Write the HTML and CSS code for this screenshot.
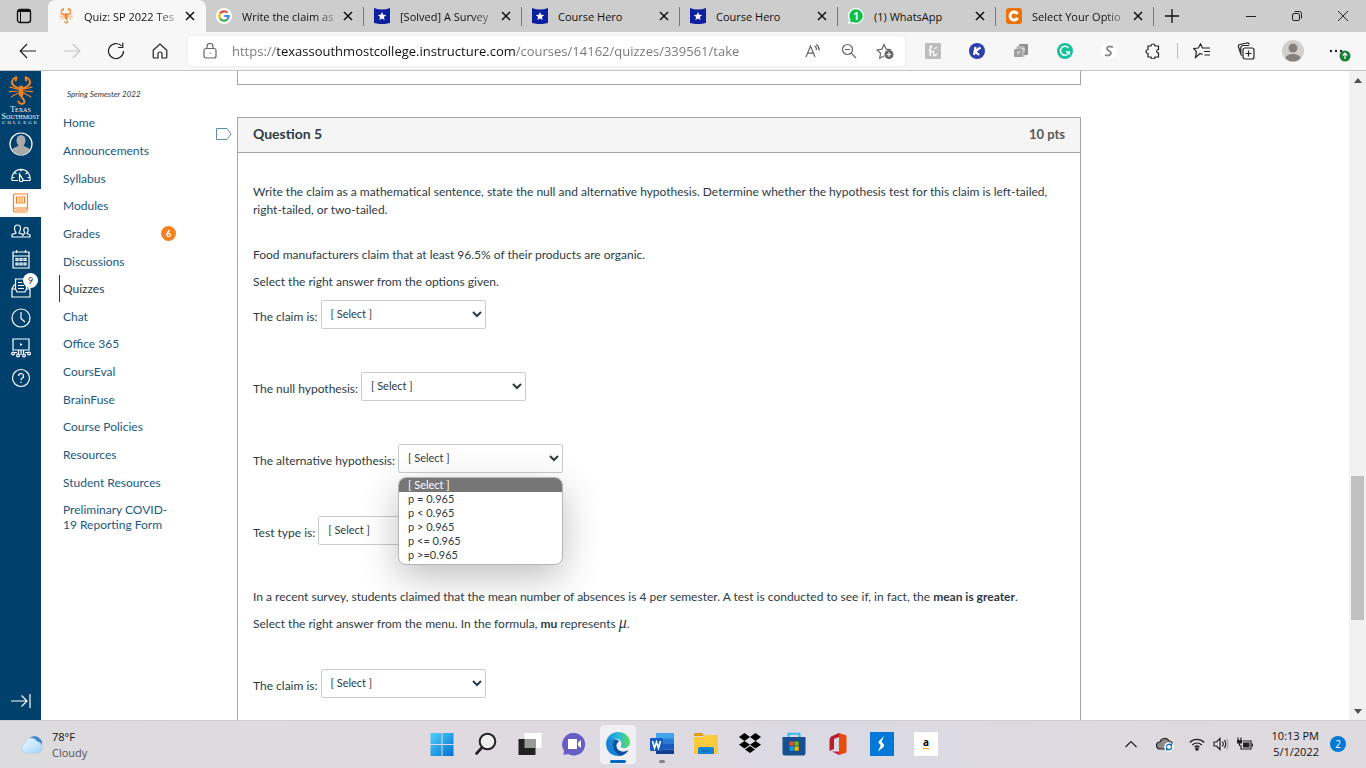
FILE: index.html
```
<!DOCTYPE html>
<html lang="en">
<head>
  <meta charset="UTF-8" />
  <meta name="viewport" content="width=device-width, initial-scale=1" />
  <title>Quiz: SP 2022 Test</title>
  <link rel="stylesheet" href="styles.css">
</head>
<body>

  <!-- tab strip -->
  <div class="tabstrip">
    <button class="tab-actions" aria-label="Tab actions">
      <svg width="16" height="16" viewBox="0 0 16 16"><rect x="1.5" y="1.5" width="13" height="13" rx="2.5" fill="none" stroke="#111" stroke-width="1.4"/><path d="M1.5 4h13V3a2 2 0 0 0-2-1.500h-9a2 2 0 0 0-2 1.500z" fill="#111"/><path d="M4.500 4v10" stroke="#111"/></svg>
    </button>
    <div class="tabs">
      <div class="tab active">
        <svg class="favicon" viewBox="0 0 40 46"><use href="#scorpion"/></svg>
        <span class="tab-title fade">Quiz: SP 2022 Tes</span>
        <button class="tab-close" aria-label="Close tab"><svg width="10" height="10" viewBox="0 0 10 10"><path d="M1 1l8 8M9 1l-8 8"/></svg></button>
      </div>
      <div class="tab">
        <svg class="favicon" viewBox="0 0 16 16"><circle cx="8" cy="8" r="8" fill="#fff"/><path d="M11.300 4.600A4.700 4.700 0 0 0 4 5.500" stroke="#ea4335" stroke-width="2.200" fill="none"/><path d="M4 5.500a4.700 4.700 0 0 0 0 5" stroke="#fbbc05" stroke-width="2.200" fill="none"/><path d="M4 10.500a4.700 4.700 0 0 0 7.200 1" stroke="#34a853" stroke-width="2.200" fill="none"/><path d="M11.200 11.500A4.700 4.700 0 0 0 12.700 8H8.200" stroke="#4285f4" stroke-width="2.200" fill="none"/></svg>
        <span class="tab-title fade">Write the claim as</span>
        <button class="tab-close" aria-label="Close tab"><svg width="10" height="10" viewBox="0 0 10 10"><path d="M1 1l8 8M9 1l-8 8"/></svg></button>
      </div>
      <div class="tab">
        <svg class="favicon" viewBox="0 0 16 16"><use href="#hero"/></svg>
        <span class="tab-title fade">[Solved] A Survey</span>
        <button class="tab-close" aria-label="Close tab"><svg width="10" height="10" viewBox="0 0 10 10"><path d="M1 1l8 8M9 1l-8 8"/></svg></button>
      </div>
      <div class="tab">
        <svg class="favicon" viewBox="0 0 16 16"><use href="#hero"/></svg>
        <span class="tab-title">Course Hero</span>
        <button class="tab-close" aria-label="Close tab"><svg width="10" height="10" viewBox="0 0 10 10"><path d="M1 1l8 8M9 1l-8 8"/></svg></button>
      </div>
      <div class="tab">
        <svg class="favicon" viewBox="0 0 16 16"><use href="#hero"/></svg>
        <span class="tab-title">Course Hero</span>
        <button class="tab-close" aria-label="Close tab"><svg width="10" height="10" viewBox="0 0 10 10"><path d="M1 1l8 8M9 1l-8 8"/></svg></button>
      </div>
      <div class="tab">
        <svg class="favicon" viewBox="0 0 16 16"><path d="M8 0a8 8 0 1 1-4 15L0 16l1-4A8 8 0 0 1 8 0z" fill="#fff"/><path d="M8 1.300a6.700 6.700 0 1 1-3.500 12.400L2 14.200l.600-2.400A6.700 6.700 0 0 1 8 1.300z" fill="#0cc143"/><text x="8" y="11.500" font-size="10" font-weight="700" fill="#fff" text-anchor="middle">1</text></svg>
        <span class="tab-title">(1) WhatsApp</span>
        <button class="tab-close" aria-label="Close tab"><svg width="10" height="10" viewBox="0 0 10 10"><path d="M1 1l8 8M9 1l-8 8"/></svg></button>
      </div>
      <div class="tab">
        <svg class="favicon" viewBox="0 0 16 16"><rect width="16" height="16" rx="3" fill="#eb7100"/><path d="M11.500 6A4 4 0 1 0 11.500 10" stroke="#fff" stroke-width="3" fill="none"/></svg>
        <span class="tab-title fade">Select Your Optio</span>
        <button class="tab-close" aria-label="Close tab"><svg width="10" height="10" viewBox="0 0 10 10"><path d="M1 1l8 8M9 1l-8 8"/></svg></button>
      </div>
      <button class="new-tab" aria-label="New tab"><svg width="14" height="14" viewBox="0 0 14 14"><path d="M7 0v14M0 7h14" stroke="#111" stroke-width="1.300"/></svg></button>
    </div>
    <div class="window-buttons">
      <button aria-label="Minimize"><svg width="10" height="10" viewBox="0 0 10 10"><path d="M0 5.500h10"/></svg></button>
      <button aria-label="Restore"><svg width="10" height="10" viewBox="0 0 10 10"><rect x=".5" y="2.500" width="7" height="7" rx="1.500"/><path d="M2.500.500h5a2 2 0 0 1 2 2v5"/></svg></button>
      <button aria-label="Close"><svg width="10" height="10" viewBox="0 0 10 10"><path d="M0 0l10 10M10 0L0 10"/></svg></button>
    </div>
  </div>

  <!-- toolbar -->
  <div class="toolbar">
    <button aria-label="Back"><svg width="18" height="16" viewBox="0 0 18 16"><path d="M17 8H1.500M8 1L1.200 8 8 15"/></svg></button>
    <button class="disabled" aria-label="Forward" disabled><svg width="18" height="16" viewBox="0 0 18 16"><path d="M1 8h15.500M10 1l6.800 7-6.800 7"/></svg></button>
    <button aria-label="Refresh"><svg width="18" height="18" viewBox="0 0 18 18"><path d="M16.500 9A7.500 7.500 0 1 1 14.500 3.900M15.800.800v4.700h-4.700"/></svg></button>
    <button aria-label="Home"><svg width="16" height="16" viewBox="0 0 16 16"><path d="M1.200 7.200L8 1l6.800 6.200V14a1 1 0 0 1-1 1H10v-4a2 2 0 0 0-4 0v4H2.200a1 1 0 0 1-1-1z"/></svg></button>
    <div class="address">
      <svg width="14" height="16" viewBox="0 0 14 16"><rect x="1" y="5.500" width="12" height="9.500" rx="2"/><path d="M4 5.500V3.500a3 3 0 0 1 6 0v2M6.500 10.200h1"/></svg>
      <input class="url" type="text" aria-label="Address" value="https://texassouthmostcollege.instructure.com/courses/14162/quizzes/339561/take">
      <button aria-label="Read aloud"><svg width="16" height="16" viewBox="0 0 16 16"><path d="M1 14L5.500 3 10 14M2.600 10.200h5.800M9.500 3a4 4 0 0 1 2 4M11.200 1.500a7 7 0 0 1 3 6"/></svg></button>
      <button aria-label="Zoom out"><svg width="16" height="16" viewBox="0 0 16 16"><circle cx="6.500" cy="6.500" r="5"/><path d="M4 6.500h5M10.200 10.200L15 15"/></svg></button>
      <button aria-label="Add to favorites"><svg width="18" height="18" viewBox="0 0 18 18"><path d="M8 14l-4.300 2.200.900-4.900L1 7.900l5-.700L8 2.500l2.200 4.700 5 .700"/><circle cx="13" cy="12.500" r="4.500" fill="#666" stroke="none"/><path d="M13 10.200v4.600M10.700 12.500h4.600" stroke="#fff"/></svg></button>
    </div>
    <button aria-label="Honey"><svg width="16" height="16" viewBox="0 0 16 16"><rect width="16" height="16" rx="1" fill="#bdbdbd" stroke="none"/><path d="M3.500 7.500C6 6.500 7.500 3 6.200 2.800S5 8 5 13c.600-3 1.800-5 3-4.800S7.800 13 9.500 12.800L12 11M9 5.500l3-1" stroke="#fff" stroke-width="1.200"/></svg></button>
    <button aria-label="Keeper"><svg width="16" height="16" viewBox="0 0 16 16"><circle cx="8" cy="8" r="8" fill="#2f3fb0" stroke="none"/><path d="M6.500 4l-1.500 8M11.500 4.500L6 8.300l4 3.700" stroke="#fff" stroke-width="2.200"/></svg></button>
    <button aria-label="Files"><svg width="16" height="16" viewBox="0 0 16 16"><rect x="6" y="1" width="9" height="11" rx="1" fill="#8f8f8f" stroke="none"/><rect x="3.500" y="3" width="8" height="11" rx="1" fill="#b8b8b8" stroke="none"/><rect x="1" y="6" width="8" height="8" rx="1" fill="#a0a0a0" stroke="none"/><path d="M5 11.500V9h2.500M9 5.500h2v3" stroke="#e4e4e4"/></svg></button>
    <button aria-label="Grammarly"><svg width="16" height="16" viewBox="0 0 16 16"><circle cx="8" cy="8" r="8" fill="#15c39a" stroke="none"/><path d="M11.500 5A4.500 4.500 0 1 0 12.300 9H9M12.300 9v2.500" stroke="#fff" stroke-width="1.500"/></svg></button>
    <button aria-label="Scribe"><svg width="16" height="16" viewBox="0 0 16 16"><circle cx="8" cy="8" r="8" fill="#fff" stroke="none"/><path d="M12 4C9 3 6 3.200 6 5.500S10.500 8 10 10.300 6.500 13 4 11.800" stroke="#8c8c8c" stroke-width="2"/></svg></button>
    <button aria-label="Extensions"><svg width="16" height="16" viewBox="0 0 16 16"><path d="M3 3h3a2 2 0 0 1 4 0h3.500v3.500a1.800 1.800 0 0 0 0 3.600V14H10a2 2 0 0 1-4 0H3v-3.500a2 2 0 0 1 0-4z"/></svg></button>
    <span class="divider"></span>
    <button aria-label="Favorites"><svg width="18" height="16" viewBox="0 0 18 16"><path d="M9.500 11.500L7 10.500l-4.500 4 .900-5.800L.800 5.500l4.500-.500L7.500 1l2 4h7.500M11 8.500h6M11.500 12h5.500"/></svg></button>
    <button aria-label="Collections"><svg width="18" height="18" viewBox="0 0 18 18"><rect x="6" y="6" width="11" height="11" rx="2"/><path d="M11.500 8.500v6M8.500 11.500h6M4 12.500L1.500 5a2 2 0 0 1 1.300-2.500L10 1a2 2 0 0 1 2.300 1.500M5 13.500A2 2 0 0 1 3.800 12V6a2.500 2.500 0 0 1 2.500-2.500H12"/></svg></button>
    <button class="wide" aria-label="Profile"><svg width="22" height="22" viewBox="0 0 22 22"><circle cx="11" cy="11" r="11" fill="#d2d0ce" stroke="none"/><circle cx="11" cy="8" r="4.500" fill="#84807d" stroke="none"/><path d="M3.500 18.500c0-6 15-6 15 0A11 11 0 0 1 3.500 18.500z" fill="#84807d" stroke="none"/></svg></button>
    <button aria-label="Settings and more"><svg width="22" height="22" viewBox="0 0 22 22"><g fill="#222" stroke="none"><circle cx="2" cy="11" r="1.200"/><circle cx="7" cy="11" r="1.200"/><circle cx="12" cy="11" r="1.200"/></g><circle cx="16" cy="16" r="5.500" fill="#1a7f37" stroke="none"/><path d="M16 19v-5.500M13.800 15.500L16 13.200l2.200 2.300" stroke="#fff"/></svg></button>
  </div>

  <!-- page -->
  <div class="page">
    <div class="global-nav">
      <a class="logo" href="#">
        <svg width="26" height="30" viewBox="0 0 40 46">
          <g id="scorpion" fill="none" stroke="#f58220" stroke-linecap="round">
            <path d="M12 2C6 4 4 11 9 15l7 4M13 2l-1 5M28 2c6 2 8 9 3 13l-7 4M27 2l1 5" stroke-width="3"/>
            <path d="M15 20L3 17M15 23L2 24M16 26L5 32M25 20l12-3M25 23l13 1M24 26l11 6" stroke-width="1.800"/>
            <path d="M20 18v10" stroke-width="7"/>
            <path d="M20 30c1 4 7 7 5 11-2 3-8 2-9-2" stroke-width="3"/>
          </g>
        </svg>
        <span class="logo-top">Texas</span>
        <span class="logo-mid">Southmost</span>
        <span class="logo-low">COLLEGE</span>
      </a>
      <a class="account" href="#" aria-label="Account"><svg width="24" height="24" viewBox="0 0 24 24"><circle cx="12" cy="12" r="11" fill="#00406d" stroke="#fff" stroke-width="1.200"/><ellipse cx="12" cy="8.500" rx="4.500" ry="5.500" fill="#aaa" stroke="none"/><path d="M3 18c1-3 6-3 6.500-5h5c.500 2 5.500 2 6.500 5a10.500 10.500 0 0 1-18 0z" fill="#aaa" stroke="none"/></svg></a>
      <a href="#" aria-label="Dashboard"><svg width="20" height="14" viewBox="0 0 20 14"><path d="M1 12.500A9.200 9.200 0 1 1 19 12.500H12.500M1 12.500h6M10 1v2.500M3.500 4.500L5.500 6M16.500 4.500l-2 1.500M1.500 9.500h2M18.500 9.500h-2M8.500 6l2.800 4.500a1.800 1.800 0 1 1-2.800 1z"/></svg></a>
      <a class="current" href="#" aria-label="Courses"><svg width="18" height="20" viewBox="0 0 18 20"><path d="M3 1h12.500v14H3.500a2 2 0 0 0 0 4h12M3 1a1.500 1.500 0 0 0-1.500 2v14M3.500 17h12M4.500 4h8v6h-8zM6 6h5M6 8h5M15.500 15v2"/></svg></a>
      <a href="#" aria-label="Groups"><svg width="20" height="14" viewBox="0 0 20 14"><path d="M1 13v-2.500L5 9c0-1-1.500-2-1.500-4.500C3.500 2 4.500 1 6.500 1s3 1 3 3.500C9.500 7 8 8 8 9l4 1.500V13zM13 13h6v-2l-3-1.500c0-1 1.200-1.500 1.200-3.500S16.500 3.500 15 3.500 12.800 4.500 12.800 6s1 2.500 1 3.500l-1.500.500"/></svg></a>
      <a href="#" aria-label="Calendar"><svg width="18" height="20" viewBox="0 0 18 20"><path d="M1 3h16v16H1zM1 7h16M4.500 1v3M13.500 1v3M4 9.500h2v2H4zM8 9.500h2v2H8zM12 9.500h2v2h-2zM4 14h2v2H4zM8 14h2v2H8zM12 14h2v2h-2z"/></svg></a>
      <a class="tall inbox" href="#" aria-label="Inbox"><svg width="20" height="20" viewBox="0 0 20 20"><path d="M4.500 11V1h11v10M1 11h3.500l1.500 3h8l1.500-3H19v8H1zM1 11l2-4h1.500M19 11l-2-4h-1.500M7 4.500h4M7 7.500h6M7 10.500h6"/></svg><span class="inbox-count">9</span></a>
      <a class="tall" href="#" aria-label="History"><svg width="20" height="20" viewBox="0 0 20 20"><circle cx="10" cy="10" r="9"/><path d="M10 4v6.500l4 3.500"/></svg></a>
      <a class="tall" href="#" aria-label="Studio"><svg width="20" height="20" viewBox="0 0 20 20"><path d="M2 1h16v11H2zM7.500 12v4M12.500 12v4M10 12v5M3 14.500h3M14 14.500h3"/><path d="M9 5l2.500 1.500L9 8z" fill="#fff" stroke="none"/><circle cx="2" cy="15.500" r="1.400"/><circle cx="18" cy="15.500" r="1.400"/><circle cx="7" cy="17.500" r="1.400"/><circle cx="13" cy="17.500" r="1.400"/></svg></a>
      <a class="tall" href="#" aria-label="Help"><svg width="20" height="20" viewBox="0 0 20 20"><circle cx="10" cy="10" r="8.500"/><path d="M7.500 8a2.500 2.500 0 1 1 3.500 2.300c-.800.400-1 .800-1 2M10 13.700v1.300"/></svg></a>
      <button class="expand" aria-label="Expand navigation"><svg width="20" height="16" viewBox="0 0 20 16"><path d="M0 8h16M10.500 2.500L16 8l-5.500 5.500M19 1v14"/></svg></button>
    </div>

    <div class="course-nav">
      <div class="term">Spring Semester 2022</div>
      <div class="menu">
        <a href="#">Home</a>
        <a href="#">Announcements</a>
        <a href="#">Syllabus</a>
        <a href="#">Modules</a>
        <a href="#">Grades <span class="badge">6</span></a>
        <a href="#">Discussions</a>
        <a class="selected" href="#">Quizzes</a>
        <a href="#">Chat</a>
        <a href="#">Office 365</a>
        <a href="#">CoursEval</a>
        <a href="#">BrainFuse</a>
        <a href="#">Course Policies</a>
        <a href="#">Resources</a>
        <a href="#">Student Resources</a>
      </div>
      <a class="long" href="#">Preliminary COVID-19 Reporting Form</a>
    </div>

    <div class="content">
      <div class="previous"></div>
      <button class="flag" aria-label="Mark question"><svg width="16" height="12" viewBox="0 0 16 12"><path d="M.5.500h10.500l4 5.500-4 5.500H.500z"/></svg></button>
      <div class="question">
        <div class="question-header">
          <span class="question-name">Question 5</span>
          <span class="question-points">10 pts</span>
        </div>
        <div class="question-text">
          <p class="intro">Write the claim as a mathematical sentence, state the null and alternative hypothesis. Determine whether the hypothesis test for this claim is left-tailed, right-tailed, or two-tailed.</p>
          <p>Food manufacturers claim that at least 96.5% of their products are organic.</p>
          <p>Select the right answer from the options given.</p>
          <div class="answer">
            <label for="claim1">The claim is:</label>
            <select id="claim1"><option>[ Select ]</option></select>
          </div>
          <div class="answer">
            <label for="null1">The null hypothesis:</label>
            <select id="null1"><option>[ Select ]</option></select>
          </div>
          <div class="answer">
            <label for="alt1">The alternative hypothesis:</label>
            <div class="open-select">
              <select id="alt1"><option>[ Select ]</option></select>
              <ul class="options">
                <li class="highlight">[ Select ]</li>
                <li>p = 0.965</li>
                <li>p &lt; 0.965</li>
                <li>p &gt; 0.965</li>
                <li>p &lt;= 0.965</li>
                <li>p &gt;=0.965</li>
              </ul>
            </div>
          </div>
          <div class="answer">
            <label for="type1">Test type is:</label>
            <select id="type1"><option>[ Select ]</option></select>
          </div>
          <p>In a recent survey, students claimed that the mean number of absences is 4 per semester. A test is conducted to see if, in fact, the <strong>mean is greater</strong>.</p>
          <p class="formula">Select the right answer from the menu. In the formula, <strong>mu</strong> represents <i class="mu">μ</i>.</p>
          <div class="answer">
            <label for="claim2">The claim is:</label>
            <select id="claim2"><option>[ Select ]</option></select>
          </div>
        </div>
      </div>
    </div>

    <div class="scrollbar">
      <svg width="16" height="18" viewBox="0 0 16 18"><path d="M4 12l4-5 4 5z"/></svg>
      <div class="track"><div class="thumb"></div></div>
      <svg width="16" height="18" viewBox="0 0 16 18"><path d="M4 7l4 5 4-5z"/></svg>
    </div>
  </div>

  <!-- taskbar -->
  <div class="taskbar">
    <div class="weather">
      <svg width="24" height="20" viewBox="0 0 24 20"><defs><linearGradient id="cloud" x2="1" y2="1"><stop stop-color="#f2fbff"/><stop offset="1" stop-color="#9fd4f5"/></linearGradient></defs><path d="M10 3c3-3 10-2 12 4v7H12z" fill="#3f87cf"/><path d="M5.500 18a5 5 0 0 1-.500-9.500 6.500 6.500 0 0 1 12-2 6 6 0 0 1 1.500 11.500z" fill="url(#cloud)" stroke="#a5cfe8" stroke-width=".6"/></svg>
      <div>
        <div>78°F</div>
        <div class="muted">Cloudy</div>
      </div>
    </div>
    <div class="apps">
      <button aria-label="Start"><svg width="24" height="24" viewBox="0 0 24 24"><defs><linearGradient id="win" x2="1" y2="1"><stop stop-color="#50d0fb"/><stop offset="1" stop-color="#0070d0"/></linearGradient></defs><path d="M.5 1h11v11H.500zM12.500 1h11v11h-11zM.5 13h11v11H.500zM12.500 13h11v11h-11z" fill="url(#win)"/></svg></button>
      <button aria-label="Search"><svg width="24" height="24" viewBox="0 0 24 24"><circle cx="13.500" cy="9.500" r="7.800" fill="#eee" stroke="#222" stroke-width="2"/><path d="M8 15.500L2.500 21.500" stroke="#222" stroke-width="2.600" stroke-linecap="round"/></svg></button>
      <button aria-label="Task view"><svg width="24" height="24" viewBox="0 0 24 24"><rect x="6.500" y="1" width="17" height="15" fill="#fff"/><rect x=".5" y="7" width="17" height="16" fill="#222"/><rect x="6.500" y="7" width="11" height="9" fill="#9b9b9b"/></svg></button>
      <button aria-label="Chat"><svg width="24" height="24" viewBox="0 0 24 24"><path d="M12 1a11.300 11.300 0 1 1-6 21l-4.500 1L2 18.500A11.300 11.300 0 0 1 12 1z" fill="#665dc6"/><path d="M6 7h9v10H6zM16 10.500L19 8v8l-3-2.500z" fill="#fff"/></svg></button>
      <button class="running focused" aria-label="Edge"><svg width="24" height="24" viewBox="0 0 24 24"><defs><linearGradient id="edge1" x2="1" y2="0"><stop stop-color="#168de0"/><stop offset=".5" stop-color="#29b8dc"/><stop offset="1" stop-color="#5bdc55"/></linearGradient></defs><path d="M0 11C1 4 6 0 12 0c7 0 12 5 12 10 0 4-3 6-6 6-2.500 0-4-1-3-2.500C17 9 12 6 8 7 4 7 1 9 0 11z" fill="url(#edge1)"/><path d="M0 11c1-3 4-4.500 8-4 4 0 5 3 5 3-4-1-5 9 4 10 3 0 4-1 5-1.500C20 22 16 24 12 24 5 24 0 19 0 11z" fill="#1683d8"/><path d="M9 8c-4 4-2 13 6 15.700C19 23 21 20.500 22.500 18c-6 4-13 0-12-5 .200-1.500 1-3 2.500-3.500C12 8 10.500 8 9 8z" fill="#0c4f9d"/></svg></button>
      <button class="running" aria-label="Word"><svg width="24" height="24" viewBox="0 0 24 24"><path d="M6 1h18v6H6z" fill="#41a5ee"/><path d="M6 6.500h18V12H6z" fill="#2b7cd3"/><path d="M6 12h18v5.500H6z" fill="#185abd"/><path d="M6 17.500h18V22H6z" fill="#103f91"/><rect y="6" width="13" height="13" rx="1" fill="#185abd"/><path d="M2.500 9l2 7 2-6 2 6 2-7" stroke="#fff" stroke-width="1.600" fill="none"/></svg></button>
      <button aria-label="File Explorer"><svg width="24" height="24" viewBox="0 0 24 24"><path d="M0 2.500A1.500 1.500 0 0 1 1.500 1H8l2 3h-10z" fill="#dd9b0c"/><path d="M0 5h9l2-2h13v19H0z" fill="#fccb3d"/><path d="M4 22v-5a2 2 0 0 1 2-2h12a2 2 0 0 1 2 2v5z" fill="#1783d1"/><path d="M8 19h8" stroke="#0b5da4"/></svg></button>
      <button aria-label="Dropbox"><svg width="24" height="24" viewBox="0 0 24 24"><path d="M6.500 1l5.500 4-5.500 4L1 5zM17.500 1L23 5l-5.500 4L12 5zM6.500 9l5.500 3.700-5.500 3.800L1 12.700zM17.500 9l5.500 3.700-5.500 3.800L12 12.700zM12 14l5 3.500-5 3.500-5-3.500z" fill="#000"/></svg></button>
      <button aria-label="Microsoft Store"><svg width="24" height="24" viewBox="0 0 24 24"><path d="M6.500 7V1.800h11V7" fill="none" stroke="#36b9ef" stroke-width="2"/><path d="M.5 5h23v16a2.500 2.500 0 0 1-2.500 2.500H3A2.500 2.500 0 0 1 .500 21z" fill="#174f8f"/><path fill="#f25022" d="M7.500 9.500h4.200v4.200H7.500z"/><path fill="#7fba00" d="M12.500 9.500h4.200v4.200h-4.200z"/><path fill="#00a4ef" d="M7.500 14.500h4.200v4.200H7.500z"/><path fill="#ffb900" d="M12.500 14.500h4.200v4.200h-4.200z"/></svg></button>
      <button aria-label="Office"><svg width="24" height="24" viewBox="0 0 24 24"><path d="M13 1l7.500 2.500v17L13 23z" fill="#e64a0c"/><path d="M13 1L5 4.500 3.500 7v12L8 17V7l5-2z" fill="#b91f2e"/><path d="M6 19.500h7V23z" fill="#cf1b4c"/></svg></button>
      <button aria-label="Stylus app"><svg width="24" height="24" viewBox="0 0 24 24"><path d="M0 0h24v24H0z" fill="#0078d7"/><path d="M14 4L9 9q-1 1.500 0 2.500l1.800 1.500L8 19.500l5.500-4.500q1.500-1.500 0-3L11.500 10z" fill="#fff"/></svg></button>
      <button aria-label="Amazon"><span class="amazon">a</span></button>
    </div>
    <div class="tray">
      <button aria-label="Show hidden icons"><svg width="14" height="10" viewBox="0 0 14 10"><path d="M1.500 8L7 2.500 12.500 8"/></svg></button>
      <svg width="18" height="16" viewBox="0 0 18 16"><path d="M4 13a3.500 3.500 0 0 1 0-7c1-4 7-5 9-1 3 0 4 3 3 5v3z" fill="#8a8a8a" stroke="#222"/><circle cx="13" cy="11" r="4.800" fill="#fff" stroke="none"/><path d="M10.300 10.500a2.800 2.800 0 0 1 5-1V7.500M15.700 11.500a2.800 2.800 0 0 1-5 1v2" stroke="#0f6cbd" stroke-width="1.500"/></svg>
      <svg class="wifi" width="16" height="14" viewBox="0 0 16 14"><path d="M.8 5.500a10 10 0 0 1 14.400 0M3.200 8a6.800 6.800 0 0 1 9.600 0M5.500 10.200a3.600 3.600 0 0 1 5 0"/><circle cx="8" cy="12" r="1.200" fill="#222"/></svg>
      <svg width="16" height="14" viewBox="0 0 16 14"><path d="M1 5h2.500L7 1.500v11L3.500 9H1zM9.500 4.500q1.500 2.500 0 5M11.500 3q2.500 4 0 8"/><path d="M13.500 1.500q3 5.500 0 11" stroke="#aaa"/></svg>
      <svg width="16" height="14" viewBox="0 0 16 14"><path d="M5.500 4H14v8H4V8M15.500 6.500v3"/><path d="M6 5.500h6.500v5H6zM0 3h5v3.500H0z" fill="#222" stroke="none"/><path d="M1 3V.500M4 3V.500M2.500 6v3"/></svg>
      <div class="clock">
        <div>10:13 PM</div>
        <div>5/1/2022</div>
      </div>
      <span class="notice">2</span>
    </div>
  </div>

  <svg class="defs" width="0" height="0">
    <g id="hero"><path d="M0 0q8 3 16 0v15l-8 1.500L0 15z" fill="#0c1f9e"/><path d="M8 4l1.200 2.700 3 .300-2.300 2 .700 3L8 10.400 5.400 12l.700-3-2.300-2 3-.300z" fill="#fff"/></g>
  </svg>

</body>
</html>
```
FILE: styles.css
```
* {
  box-sizing: border-box;
}
body {
  margin: 0;
  height: 100vh;
  display: flex;
  flex-direction: column;
  overflow: hidden;
  background-color: #fff;
  font-family: "Open Sans", sans-serif;
  font-size: 11px;
  color: #111;
}
button {
  display: flex;
  align-items: center;
  justify-content: center;
  padding: 0;
  border: none;
  background: none;
  font-family: inherit;
}
svg {
  display: block;
  flex: none;
}
a {
  text-decoration: none;
}
.defs {
  position: absolute;
}

/* tab strip */
.tabstrip {
  flex: none;
  display: flex;
  height: 32px;
  background-color: #cdcdcd;
}
.tab-actions {
  width: 48px;
}
.tabs {
  flex: 1;
  display: flex;
  min-width: 0;
}
.tab {
  flex: 0 1 158px;
  min-width: 0;
  display: flex;
  align-items: center;
  padding: 0 11px 0 10px;
  position: relative;
}
.tab:not(.active)::after {
  content: "";
  position: absolute;
  right: 0;
  top: 7px;
  width: 1px;
  height: 19px;
  background-color: #777;
}
.tab.active {
  background-color: #f7f7f7;
  border-radius: 7px 7px 0 0;
}
.favicon {
  width: 16px;
  height: 16px;
  margin-right: 10px;
}
.tab-title {
  flex: 1;
  overflow: hidden;
  white-space: nowrap;
}
.tab-title.fade {
  mask-image: linear-gradient(to right, #000 75%, rgba(0, 0, 0, 0.2));
}
.tab-close {
  width: 10px;
  margin-left: 5px;
}
.tab-close svg {
  stroke: #111;
  stroke-width: 1.5;
}
.new-tab {
  width: 36px;
}
.window-buttons {
  display: flex;
}
.window-buttons button {
  width: 46px;
}
.window-buttons svg {
  fill: none;
  stroke: #222;
}

/* toolbar */
.toolbar {
  flex: none;
  display: flex;
  align-items: center;
  height: 39px;
  padding: 0 4px 0 6px;
  background-color: #f7f7f7;
  border-bottom: 1px solid #c4c4c4;
}
.toolbar > button {
  width: 44px;
}
.toolbar > .wide {
  width: 50px;
}
.toolbar svg {
  fill: none;
  stroke: #222;
  stroke-width: 1.2;
}
.toolbar .disabled svg {
  stroke: #c6c6c6;
}
.address {
  flex: 1;
  display: flex;
  align-items: center;
  height: 30px;
  margin: 0 6px;
  padding: 0 2px 0 15px;
  background-color: #fff;
  border-radius: 4px;
  box-shadow: 0 0 3px #e4e4e4;
}
.address svg {
  stroke: #666;
}
.address button {
  width: 36px;
}
.url {
  flex: 1;
  min-width: 0;
  margin-left: 15px;
  padding: 0;
  border: none;
  font-family: inherit;
  font-size: 13px;
  color: transparent;
  background: linear-gradient(to right, #757575 45px, #111 45px, #111 284px, #757575 284px);
  background-clip: text;
  -webkit-background-clip: text;
}
.divider {
  width: 1px;
  height: 16px;
  margin: 0 2px;
  background-color: #c0c0c0;
}

/* page */
.page {
  flex: 1;
  min-height: 0;
  display: flex;
  overflow: hidden;
  font-family: Lato, sans-serif;
  color: #2d3b45;
}
.global-nav {
  flex: none;
  width: 41px;
  display: flex;
  flex-direction: column;
  background-color: #00406d;
}
.global-nav a,
.expand {
  display: flex;
  align-items: center;
  justify-content: center;
  height: 28px;
}
.global-nav svg {
  fill: none;
  stroke: #fff;
  stroke-width: 1.2;
}
.global-nav .logo {
  flex-direction: column;
  justify-content: flex-start;
  height: 56px;
  padding-top: 5px;
  overflow: hidden;
  font-family: "Liberation Serif", serif;
  font-variant: small-caps;
  color: #fff;
}
.logo-top,
.logo-mid {
  font-size: 8px;
  line-height: 7px;
}
.logo-low {
  font-size: 5px;
  line-height: 5px;
  letter-spacing: 2px;
}
.global-nav .account {
  height: 34px;
}
.global-nav .current {
  background-color: #fff;
}
.global-nav .current svg {
  stroke: #f58220;
}
.global-nav .tall {
  height: 30px;
}
.inbox {
  position: relative;
}
.inbox-count {
  position: absolute;
  top: 0;
  right: 3px;
  width: 15px;
  height: 15px;
  border-radius: 50%;
  background-color: #fff;
  color: #2d3b45;
  font-size: 9px;
  line-height: 15px;
  text-align: center;
}
.expand {
  height: 38px;
  margin-top: auto;
}

.course-nav {
  flex: none;
  width: 175px;
  padding: 16px 40px 0 18px;
  font-size: 12px;
}
.term {
  padding-left: 8px;
  margin-bottom: 7px;
  font-size: 8px;
  font-style: italic;
  line-height: 15px;
  white-space: nowrap;
}
.course-nav a {
  color: #20597f;
}
.menu {
  display: grid;
  grid-auto-rows: 1fr;
  height: 387px;
}
.menu a {
  display: flex;
  align-items: center;
  justify-content: space-between;
  padding-left: 3px;
  border-left: 1px solid transparent;
  white-space: nowrap;
}
.menu .selected {
  border-color: #2d3b45;
  color: #2d3b45;
}
.badge {
  width: 15px;
  height: 15px;
  border-radius: 50%;
  background-color: #f58220;
  color: #fff;
  font-size: 9px;
  font-weight: bold;
  line-height: 15px;
  text-align: center;
}
.long {
  display: block;
  padding: 6px 0 0 4px;
  line-height: 15px;
}

.content {
  flex: 1;
  min-width: 0;
  display: grid;
  grid-template-columns: 21px 1fr;
  grid-template-rows: 14px 1fr;
  row-gap: 32px;
  padding-right: 268px;
}
.previous {
  grid-column: 2;
  border: 1px solid #a5a5a5;
  border-top: none;
}
.flag {
  align-self: start;
  justify-content: flex-start;
  height: 34px;
}
.flag svg {
  fill: none;
  stroke: #5d8cab;
}
.question {
  border: 1px solid #a5a5a5;
}
.question-header {
  display: flex;
  justify-content: space-between;
  align-items: center;
  height: 35px;
  padding: 0 15px 3px;
  background-color: #f5f5f5;
  border-bottom: 1px solid #a5a5a5;
  font-weight: bold;
}
.question-name {
  font-size: 14px;
}
.question-points {
  font-size: 13px;
  color: #595959;
}
.question-text {
  padding: 30px 15px 0;
  font-size: 12px;
  line-height: 18px;
}
.question-text p {
  margin: 0 0 9px;
}
.question-text .intro {
  margin-bottom: 27px;
}
.question-text .formula {
  margin-bottom: 36px;
}
.answer {
  display: flex;
  gap: 3px;
  margin-bottom: 43px;
}
.answer label {
  padding-top: 8px;
}
.answer select {
  width: 165px;
  height: 29px;
  padding: 0 6px 2px 5px;
  border: 1px solid #c7cdd1;
  border-radius: 2px;
  background-color: #fff;
  color: #2d3b45;
  font-family: inherit;
  font-size: 11px;
}
.mu {
  font-family: "Liberation Serif", serif;
  font-size: 16px;
  line-height: 14px;
}
.open-select {
  position: relative;
}
.open-select select {
  display: block;
}
.options {
  position: absolute;
  top: 33px;
  left: 0;
  width: 100%;
  margin: 0;
  padding: 0 0 2px;
  overflow: hidden;
  list-style: none;
  background-color: #fff;
  border: 1px solid #b5b5b5;
  border-radius: 8px;
  box-shadow: 0 12px 36px rgba(0, 0, 0, 0.25);
  font-size: 11px;
  line-height: 14px;
}
.options li {
  padding-left: 9px;
}
.options .highlight {
  background-color: #767676;
  color: #fff;
}

.scrollbar {
  flex: none;
  width: 17px;
  display: flex;
  flex-direction: column;
  align-items: center;
  background-color: #f1f1f1;
}
.scrollbar svg {
  fill: #505050;
}
.track {
  flex: 1;
  display: flex;
  flex-direction: column;
}
.track::before {
  content: "";
  flex: 387;
}
.track::after {
  content: "";
  flex: 82;
}
.thumb {
  flex: 144;
  width: 13px;
  background-color: #c1c1c1;
}

/* taskbar */
.taskbar {
  flex: none;
  display: grid;
  grid-template-columns: 1fr auto 1fr;
  align-items: center;
  height: 48px;
  border-top: 1px solid #cfcdd0;
  background: linear-gradient(to right, #dcdbde, #e0dade 30%, #dbd9e3 60%, #dedadd);
}
.weather {
  display: flex;
  align-items: center;
  gap: 8px;
  padding-left: 20px;
  line-height: 16px;
}
.muted {
  color: #555;
}
.apps {
  display: flex;
  padding-left: 2px;
}
.apps button {
  width: 44px;
  height: 47px;
  padding-bottom: 2px;
  position: relative;
}
.focused::before {
  content: "";
  position: absolute;
  inset: 4px;
  background-color: #f0eff3;
  border-radius: 4px;
}
.apps svg {
  position: relative;
}
.running::after {
  content: "";
  position: absolute;
  bottom: 5px;
  width: 6px;
  height: 3px;
  border-radius: 2px;
  background-color: #858387;
}
.focused::after {
  width: 16px;
  background-color: #0067c0;
}
.amazon {
  width: 24px;
  height: 24px;
  background: linear-gradient(#f90, #f90) center 16px / 6px 1px no-repeat #fff;
  font-size: 10px;
  font-weight: bold;
  line-height: 20px;
}
.tray {
  display: flex;
  align-items: center;
  justify-content: flex-end;
  gap: 8px;
  padding: 0 20px 2px 0;
}
.tray svg {
  fill: none;
  stroke: #222;
  stroke-width: 1.2;
}
.tray button {
  margin-right: 10px;
}
.wifi {
  margin-left: 7px;
}
.clock {
  margin: 0 3px 0 11px;
  line-height: 16px;
  text-align: right;
}
.notice {
  width: 16px;
  height: 16px;
  border-radius: 50%;
  background-color: #0078d4;
  color: #fff;
  font-size: 10px;
  line-height: 16px;
  text-align: center;
}
```
